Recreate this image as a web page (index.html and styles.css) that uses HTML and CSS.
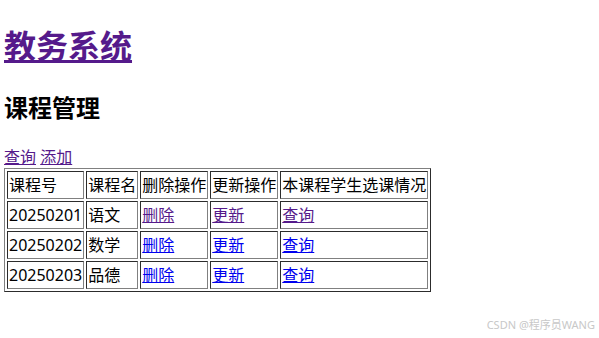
FILE: index.html
```html
<!DOCTYPE html>
<html lang="zh">
<head>
    <meta charset="UTF-8">
    <title>课程管理</title>
    <link rel="stylesheet" href="styles.css">
</head>
<body>
    <h1><a href="#" class="seen">教务系统</a></h1>
    <h2>课程管理</h2>
    <a href="#" class="seen">查询</a>
    <a href="#" class="seen">添加</a>
    <table border="1">
        <tr>
            <td>课程号</td>
            <td>课程名</td>
            <td>删除操作</td>
            <td>更新操作</td>
            <td>本课程学生选课情况</td>
        </tr>
        <tr>
            <td>20250201</td>
            <td>语文</td>
            <td><a href="#" class="seen">删除</a></td>
            <td><a href="#" class="seen">更新</a></td>
            <td><a href="#" class="seen">查询</a></td>
        </tr>
        <tr>
            <td>20250202</td>
            <td>数学</td>
            <td><a href="#">删除</a></td>
            <td><a href="#">更新</a></td>
            <td><a href="#">查询</a></td>
        </tr>
        <tr>
            <td>20250203</td>
            <td>品德</td>
            <td><a href="#">删除</a></td>
            <td><a href="#">更新</a></td>
            <td><a href="#">查询</a></td>
        </tr>
    </table>
    <div class="watermark">CSDN @程序员WANG</div>
</body>
</html>
```

FILE: styles.css
```css
body {
    font-family: "Noto Sans", "Noto Sans CJK SC", sans-serif;
    font-size: 16px;
    color: #000;
    background: #fff;
    margin: 0 4px;
}

a {
    color: #0000ee;
}

a.seen {
    color: #551a8b;
}

td {
    padding: 1px;
    line-height: 24px;
    white-space: nowrap;
}

.watermark {
    position: absolute;
    right: 4px;
    bottom: 6px;
    font-size: 11px;
    color: #c8c8c8;
}
```
